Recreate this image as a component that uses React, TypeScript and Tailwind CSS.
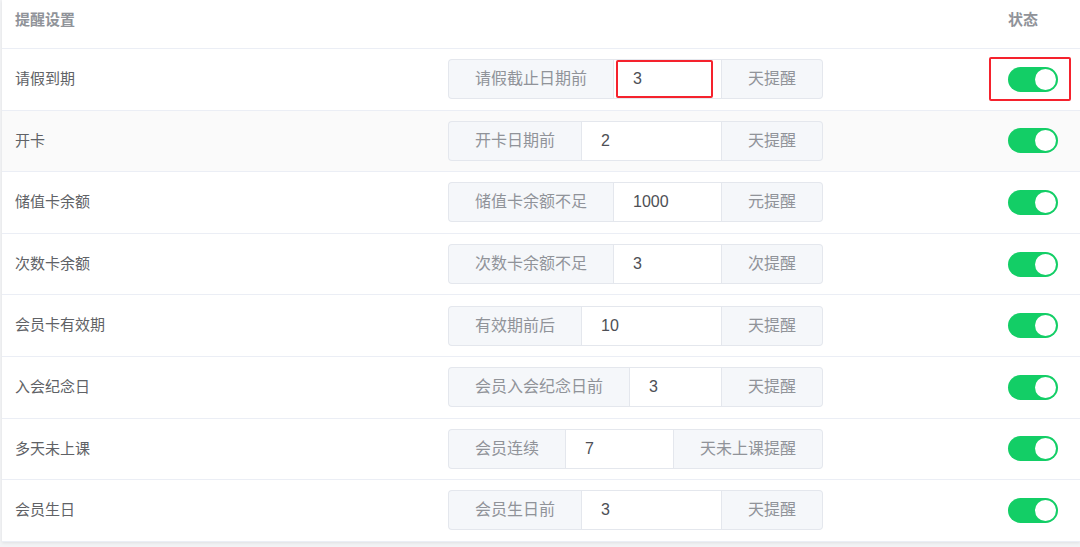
import { useState } from "react";

type Rule = {
  name: string;
  before: string;
  value: string;
  after: string;
};

const RULES: Rule[] = [
  { name: "请假到期", before: "请假截止日期前", value: "3", after: "天提醒" },
  { name: "开卡", before: "开卡日期前", value: "2", after: "天提醒" },
  { name: "储值卡余额", before: "储值卡余额不足", value: "1000", after: "元提醒" },
  { name: "次数卡余额", before: "次数卡余额不足", value: "3", after: "次提醒" },
  { name: "会员卡有效期", before: "有效期前后", value: "10", after: "天提醒" },
  { name: "入会纪念日", before: "会员入会纪念日前", value: "3", after: "天提醒" },
  { name: "多天未上课", before: "会员连续", value: "7", after: "天未上课提醒" },
  { name: "会员生日", before: "会员生日前", value: "3", after: "天提醒" },
];

function Toggle({ on, onChange }: { on: boolean; onChange: () => void }) {
  return (
    <button
      type="button"
      onClick={onChange}
      className={`relative block h-[25px] w-[50px] rounded-full transition-colors ${
        on ? "bg-[#13ce66]" : "bg-[#dcdfe6]"
      }`}
    >
      <span
        className={`absolute top-[2px] h-[21px] w-[21px] rounded-full bg-white transition-all ${
          on ? "left-[27px]" : "left-[2px]"
        }`}
      />
    </button>
  );
}

export default function App() {
  const [values, setValues] = useState(RULES.map((r) => r.value));
  const [enabled, setEnabled] = useState(RULES.map(() => true));

  return (
    <div
      className="min-h-[547px] bg-[#f2f3f5] pb-[5px] pl-[2px]"
      style={{ fontFamily: '"Liberation Sans", "Noto Sans CJK SC", sans-serif' }}
    >
      <div className="bg-white shadow-[0_1px_3px_rgba(0,0,0,0.08)]">
        {/* header */}
        <div className="flex h-[49px] border-b border-[#ebeef5] text-[15px] font-bold text-[#909399]">
          <div className="flex-1 pl-[13px] pt-[9px]">提醒设置</div>
          <div className="w-[72px] pt-[9px]">状态</div>
        </div>

        {RULES.map((rule, i) => (
          <div
            key={rule.name}
            className={`relative flex h-[61.6px] items-center border-b border-[#ebeef5] ${
              i === 1 ? "bg-[#fafafa]" : "bg-white"
            }`}
          >
            <div className="w-[446px] pl-[13px] text-[15px] text-[#606266]">{rule.name}</div>

            <div className="flex h-[40px] w-[375px] text-[16px]">
              <div className="flex items-center whitespace-nowrap rounded-l-[4px] border border-r-0 border-[#e4e7ed] bg-[#f5f7fa] px-[26px] text-[#909399]">
                {rule.before}
              </div>
              <div className="relative flex min-w-0 flex-1 border border-[#e4e7ed] bg-white">
                <input
                  value={values[i]}
                  onChange={(e) =>
                    setValues((v) => v.map((x, j) => (j === i ? e.target.value : x)))
                  }
                  className="w-full min-w-0 bg-transparent pl-[19px] text-[16px] text-[#4d4f55] outline-none"
                />
                {i === 0 && (
                  <div className="pointer-events-none absolute bottom-0 left-[2px] right-[8px] top-0 rounded-[2px] border-2 border-[#f5222d]" />
                )}
              </div>
              <div className="flex items-center whitespace-nowrap rounded-r-[4px] border border-l-0 border-[#e4e7ed] bg-[#f5f7fa] px-[26px] text-[#909399]">
                {rule.after}
              </div>
            </div>

            <div className="flex-1" />
            <div className="relative flex w-[72px] items-center">
              <Toggle
                on={enabled[i]}
                onChange={() => setEnabled((v) => v.map((x, j) => (j === i ? !x : x)))}
              />
              {i === 0 && (
                <div className="pointer-events-none absolute -left-[19px] -top-[10px] h-[44px] w-[82px] rounded-[2px] border-2 border-[#f5222d]" />
              )}
            </div>
          </div>
        ))}
      </div>
    </div>
  );
}
